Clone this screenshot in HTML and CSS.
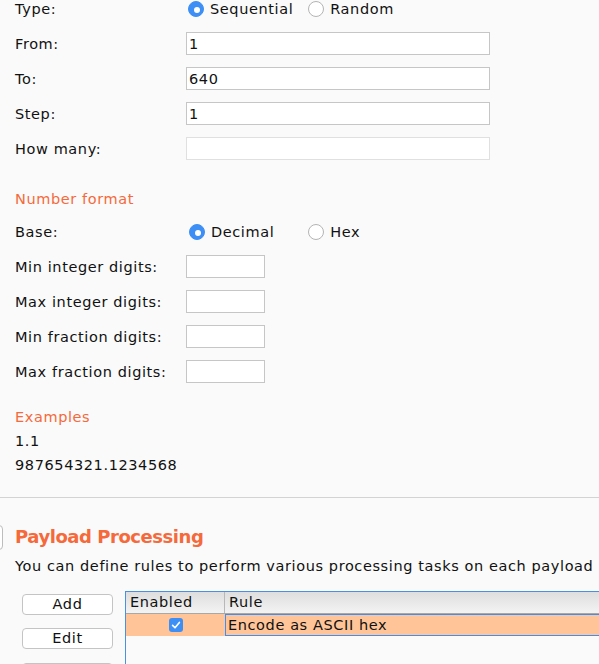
FILE: index.html
```html
<!DOCTYPE html>
<html>
<head>
<meta charset="utf-8">
<link rel="stylesheet" href="styles.css">
</head>
<body>
<div class="page">
  <div class="form">
    <div class="row">
      <span class="label">Type:</span>
      <div class="radios">
        <label class="radio"><span class="dot on"></span>Sequential</label>
        <label class="radio"><span class="dot"></span>Random</label>
      </div>
    </div>
    <div class="row"><span class="label">From:</span><span class="input wide">1</span></div>
    <div class="row"><span class="label">To:</span><span class="input wide">640</span></div>
    <div class="row"><span class="label">Step:</span><span class="input wide">1</span></div>
    <div class="row"><span class="label">How many:</span><span class="input wide disabled"></span></div>
  </div>

  <div class="section-title first">Number format</div>
  <div class="form base">
    <div class="row">
      <span class="label">Base:</span>
      <div class="radios">
        <label class="radio dec"><span class="dot on"></span>Decimal</label>
        <label class="radio"><span class="dot"></span>Hex</label>
      </div>
    </div>
    <div class="row"><span class="label">Min integer digits:</span><span class="input small"></span></div>
    <div class="row"><span class="label">Max integer digits:</span><span class="input small"></span></div>
    <div class="row"><span class="label">Min fraction digits:</span><span class="input small"></span></div>
    <div class="row"><span class="label">Max fraction digits:</span><span class="input small"></span></div>
  </div>

  <div class="examples">
    <div class="section-title ex">Examples</div>
    <div class="ex-line">1.1</div>
    <div class="ex-line">987654321.1234568</div>
  </div>
</div>

<hr class="divider">

<div class="page">
  <div class="pp-head">
    <span class="help-btn"></span>
    <h2 class="pp-title">Payload Processing</h2>
  </div>
  <div class="desc">You can define rules to perform various processing tasks on each payload</div>

  <div class="rules">
    <div class="buttons">
      <button class="btn">Add</button>
      <button class="btn">Edit</button>
      <button class="btn last"></button>
    </div>
    <div class="table">
      <div class="thead">
        <div class="th col-en">Enabled</div>
        <div class="th col-rule">Rule</div>
      </div>
      <div class="tr selected">
        <div class="td col-en"><span class="check"><svg viewBox="0 0 14 14" width="14" height="14"><path d="M3.6 7.4 L6 9.8 L10.4 4.4" fill="none" stroke="#fff" stroke-width="1.6" stroke-linecap="round" stroke-linejoin="round"/></svg></span></div>
        <div class="td col-rule focus">Encode as ASCII hex</div>
      </div>
    </div>
  </div>
</div>
</body>
</html>
```

FILE: styles.css
```css
html, body {
  margin: 0;
  padding: 0;
  background: #fafafa;
  height: 664px;
  overflow: hidden;
}
body {
  font-family: "DejaVu Sans", "Liberation Sans", sans-serif;
  font-size: 14.5px;
  letter-spacing: 0.6px;
  color: #111;
}
.page {
  padding-left: 15px;
}
.form {
  margin-top: -9px;
}
.form.base {
  margin-top: 5px;
}
.row {
  height: 35px;
  display: flex;
  align-items: center;
}
.label {
  width: 171px;
  flex: none;
}
.radios {
  display: flex;
  align-items: center;
  gap: 15px;
  margin-left: 2px;
}
.radio {
  display: flex;
  align-items: center;
  gap: 6px;
}
.radio.dec {
  margin-left: 1px;
  margin-right: 19px;
}
.dot {
  width: 14px;
  height: 14px;
  border-radius: 50%;
  border: 1px solid #b4b4b4;
  background: #fff;
  box-sizing: content-box;
  position: relative;
}
.dot.on {
  border-color: #3d8ff5;
  background: #3d8ff5;
}
.dot.on::after {
  content: "";
  position: absolute;
  left: 5px;
  top: 5px;
  width: 6px;
  height: 6px;
  border-radius: 50%;
  background: #fff;
}
.input {
  height: 23px;
  box-sizing: border-box;
  border: 1px solid #c6c6c6;
  background: #fff;
  display: flex;
  align-items: center;
  padding-left: 2px;
}
.input.wide {
  width: 304px;
}
.input.disabled {
  border-color: #e0e0e0;
}
.input.small {
  width: 79px;
}
.section-title {
  color: #f5693a;
  line-height: 20px;
  height: 20px;
}
.section-title.first {
  margin-top: 23px;
}
.examples {
  margin-top: 16px;
}
.section-title.ex,
.ex-line {
  line-height: 24px;
  height: 24px;
}
.divider {
  margin: 20px 0 0;
  border: 0;
  height: 1px;
  background: #d3d3d3;
}
.pp-head {
  margin-top: 26px;
  height: 26px;
  display: flex;
  align-items: center;
  gap: 12px;
}
.help-btn {
  width: 20px;
  height: 25px;
  margin-left: -32px;
  box-sizing: border-box;
  border: 1px solid #bdbdbd;
  border-radius: 4px;
  background: #fff;
}
.pp-title {
  margin: 0;
  font-size: 18px;
  font-weight: bold;
  letter-spacing: -0.45px;
  color: #f5693a;
  line-height: 24px;
}
.desc {
  margin-top: 6px;
  line-height: 20px;
}
.rules {
  margin-top: 15px;
  display: flex;
  gap: 12px;
}
.buttons {
  margin-left: 7px;
  width: 91px;
  display: flex;
  flex-direction: column;
  gap: 13px;
  padding-top: 3px;
}
.btn {
  height: 21px;
  width: 91px;
  flex: none;
  padding: 0;
  font-family: inherit;
  font-size: 14.5px;
  letter-spacing: 0.6px;
  color: #111;
  background: #fff;
  border: 1px solid #c4c4c4;
  border-radius: 4px;
  line-height: 19px;
}
.btn.last {
  margin-top: 1px;
}
.table {
  flex: 1;
  border-left: 1px solid #4a8fe2;
  border-top: 1px solid #4a8fe2;
  height: 80px;
  margin-right: -20px;
}
.thead {
  display: flex;
  height: 21px;
  background: linear-gradient(#dedede, #f3f3f3);
  border-bottom: 1px solid #a8a8a8;
}
.th {
  line-height: 21px;
  padding-left: 4px;
  box-sizing: border-box;
}
.col-en {
  width: 99px;
  flex: none;
  box-sizing: border-box;
}
.th.col-en {
  border-right: 1px solid #b8b8b8;
}
.col-rule {
  flex: 1;
}
.tr {
  display: flex;
  height: 22px;
}
.tr.selected {
  background: #ffc599;
}
.td.col-en {
  display: flex;
  align-items: center;
  justify-content: center;
  margin-top: 1px;
  height: 20px;
}
.check {
  width: 14px;
  height: 14px;
  border-radius: 3px;
  background: #3d8ff5;
  display: block;
  margin-left: 1px;
}
.check svg {
  display: block;
}
.td.focus {
  border: 1px solid #3d8ff5;
  border-right: 0;
  line-height: 20px;
  padding-left: 2px;
}
```
